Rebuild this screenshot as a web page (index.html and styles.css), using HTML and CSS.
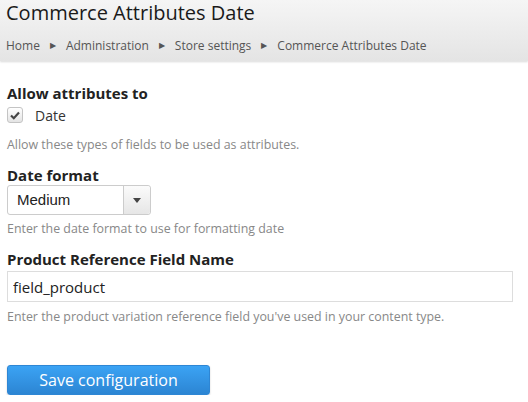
FILE: index.html
```html
<!DOCTYPE html>
<html lang="en">
<head>
  <meta charset="UTF-8">
  <title>Commerce Attributes Date</title>
  <link rel="stylesheet" href="styles.css">
</head>
<body>
  <div class="header">
    <h1>Commerce Attributes Date</h1>
    <ul class="breadcrumb">
      <li><a href="#">Home</a></li>
      <li><a href="#">Administration</a></li>
      <li><a href="#">Store settings</a></li>
      <li><a href="#">Commerce Attributes Date</a></li>
    </ul>
  </div>

  <form class="content">
    <div class="formItem">
      <label class="title">Allow attributes to</label>
      <label class="checkRow">
        <span class="checkbox">
          <svg width="10" height="9" viewBox="0 0 10 9"><path d="M1 4.5 L3.8 7.2 L9 1.6" fill="none" stroke="#444" stroke-width="2.2"/></svg>
        </span>
        Date
      </label>
      <div class="description">Allow these types of fields to be used as attributes.</div>
    </div>

    <div class="formItem">
      <label class="title">Date format</label>
      <div class="select">
        <span class="selectValue">Medium</span>
        <span class="selectArrow"></span>
      </div>
      <div class="description">Enter the date format to use for formatting date</div>
    </div>

    <div class="formItem">
      <label class="title" for="ref">Product Reference Field Name</label>
      <input type="text" id="ref" class="textInput" value="field_product">
      <div class="description">Enter the product variation reference field you've used in your content type.</div>
    </div>

    <div class="actions">
      <button type="button" class="btn">Save configuration</button>
    </div>
  </form>
</body>
</html>
```

FILE: styles.css
```css
body {
  margin: 0;
  padding: 0;
  background: #fff;
  color: #333;
  font-family: 'Open Sans', sans-serif;
}

.header {
  height: 61px;
  padding: 0 6px;
  background: linear-gradient(#f5f5f5, #e4e4e4);
  box-shadow: 0 1px 2px rgba(0,0,0,0.15);
  box-sizing: border-box;
}
.header h1 {
  margin: 0;
  font-size: 20px;
  font-weight: normal;
  line-height: 26px;
  color: #1a1a1a;
}
.breadcrumb {
  list-style: none;
  margin: 0;
  padding: 11px 0 0;
  display: flex;
  font-size: 12px;
  line-height: 18px;
}
.breadcrumb li {
  color: #555;
}
.breadcrumb li a {
  color: #555;
  text-decoration: none;
}
.breadcrumb li + li::before {
  content: "\25B6";
  font-size: 8px;
  margin: 0 10px;
  position: relative;
  top: -2px;
  color: #555;
}

.content {
  padding: 22px 7px 0;
}
.formItem {
  margin-bottom: 12px;
}
.title {
  display: block;
  font-weight: bold;
  font-size: 15px;
  line-height: 20px;
  color: #222;
}
.checkRow {
  display: flex;
  align-items: center;
  font-size: 14px;
  color: #333;
  margin-top: 4px;
  padding-bottom: 8px;
  height: 16px;
}
.checkbox {
  width: 14px;
  height: 14px;
  border: 1px solid #c4c4c4;
  border-radius: 3px;
  background: linear-gradient(#fff, #e4e4e4);
  display: flex;
  align-items: center;
  justify-content: center;
  margin-right: 12px;
}
.description {
  font-size: 12.4px;
  color: #888;
  line-height: 16px;
  padding-top: 6px;
}
.select {
  width: 142px;
  height: 28px;
  border: 1px solid #ccc;
  border-radius: 3px;
  display: flex;
  background: #fff;
}
.selectValue {
  flex: 1;
  padding-left: 9px;
  font-family: 'Liberation Sans', Arial, sans-serif;
  font-size: 15px;
  line-height: 28px;
  color: #222;
}
.selectArrow {
  width: 26px;
  border-left: 1px solid #ccc;
  background: linear-gradient(#fbfbfb, #e6e6e6);
  border-radius: 0 3px 3px 0;
  position: relative;
}
.selectArrow::after {
  content: "";
  position: absolute;
  left: 9px;
  top: 12px;
  border-left: 4px solid transparent;
  border-right: 4px solid transparent;
  border-top: 5px solid #444;
}
.textInput {
  display: block;
  margin-top: 2px;
  width: 506px;
  height: 31px;
  box-sizing: border-box;
  border: 1px solid #ddd;
  padding: 0 5px;
  font-family: 'Open Sans', sans-serif;
  font-size: 15px;
  color: #222;
}
.textInput + .description {
  padding-top: 7px;
}
.actions {
  padding-top: 28px;
}
.btn {
  width: 203px;
  height: 30px;
  border: 1px solid #2e86d4;
  border-radius: 3px;
  background: linear-gradient(#3ba3f4, #2c85d3);
  color: #fff;
  font-family: 'Open Sans', sans-serif;
  font-size: 16px;
  line-height: 20px;
  cursor: pointer;
  box-shadow: 0 1px 2px rgba(0,0,0,0.2);
}
```
